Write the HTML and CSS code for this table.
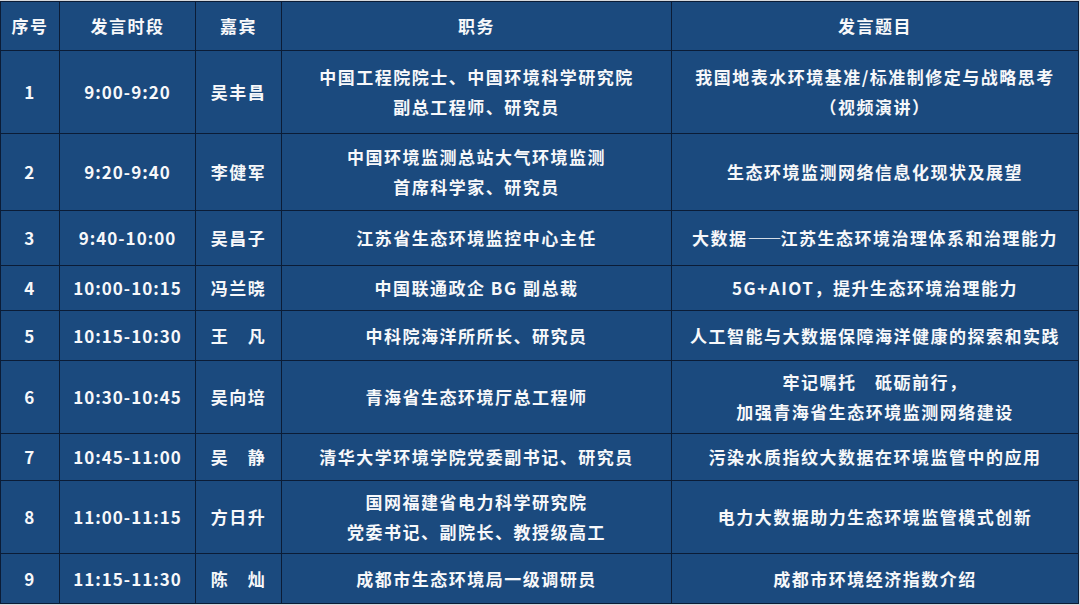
FILE: index.html
```html
<!DOCTYPE html>
<html lang="zh-CN">
<head>
<meta charset="utf-8">
<title>议程</title>
<link rel="stylesheet" href="styles.css">
</head>
<body>
<table class="agenda">
  <colgroup>
    <col class="c-no"><col class="c-time"><col class="c-name"><col class="c-role"><col class="c-topic">
  </colgroup>
  <thead>
    <tr class="r-head"><th>序号</th><th>发言时段</th><th>嘉宾</th><th>职务</th><th>发言题目</th></tr>
  </thead>
  <tbody>
    <tr class="r1"><td>1</td><td class="time">9:00-9:20</td><td>吴丰昌</td><td>中国工程院院士、中国环境科学研究院<br>副总工程师、研究员</td><td>我国地表水环境基准/标准制修定与战略思考<br>（视频演讲）</td></tr>
    <tr class="r2"><td>2</td><td class="time">9:20-9:40</td><td>李健军</td><td>中国环境监测总站大气环境监测<br>首席科学家、研究员</td><td>生态环境监测网络信息化现状及展望</td></tr>
    <tr class="r3"><td>3</td><td class="time">9:40-10:00</td><td>吴昌子</td><td>江苏省生态环境监控中心主任</td><td>大数据<span class="dash">——</span>江苏生态环境治理体系和治理能力</td></tr>
    <tr class="r4"><td>4</td><td class="time">10:00-10:15</td><td>冯兰晓</td><td>中国联通政企 BG 副总裁</td><td>5G+AIOT，提升生态环境治理能力</td></tr>
    <tr class="r5 line-light"><td>5</td><td class="time">10:15-10:30</td><td>王　凡</td><td>中科院海洋所所长、研究员</td><td>人工智能与大数据保障海洋健康的探索和实践</td></tr>
    <tr class="r6 line-gray"><td>6</td><td class="time">10:30-10:45</td><td>吴向培</td><td>青海省生态环境厅总工程师</td><td>牢记嘱托　砥砺前行，<br>加强青海省生态环境监测网络建设</td></tr>
    <tr class="r7"><td>7</td><td class="time">10:45-11:00</td><td>吴　静</td><td>清华大学环境学院党委副书记、研究员</td><td>污染水质指纹大数据在环境监管中的应用</td></tr>
    <tr class="r8"><td>8</td><td class="time">11:00-11:15</td><td>方日升</td><td>国网福建省电力科学研究院<br>党委书记、副院长、教授级高工</td><td>电力大数据助力生态环境监管模式创新</td></tr>
    <tr class="r9 line-gray"><td>9</td><td class="time">11:15-11:30</td><td>陈　灿</td><td>成都市生态环境局一级调研员</td><td>成都市环境经济指数介绍</td></tr>
  </tbody>
</table>
</body>
</html>
```
FILE: styles.css
```css
html, body {
  margin: 0;
  padding: 0;
  background: #d6d8dc;
}
body {
  padding-top: 1px;
  width: 1080px;
  height: 605px;
  overflow: hidden;
}
.agenda {
  width: 1078px;
  table-layout: fixed;
  border-collapse: collapse;
  background: #1b4a7e;
  color: #f7f8fa;
  font-family: "Noto Sans CJK SC", "Noto Sans", sans-serif;
  font-weight: 700;
  font-size: 17px;
  letter-spacing: 1.5px;
}
.c-no { width: 59px; }
.c-time { width: 136px; }
.c-name { width: 86px; }
.c-role { width: 390px; }
.c-topic { width: 407px; }
.agenda th, .agenda td {
  border: 1px solid #0b1c36;
  text-align: center;
  vertical-align: middle;
  padding: 0;
  line-height: 30px;
  font-weight: 700;
  white-space: nowrap;
}
.agenda td.time { letter-spacing: 1px; }
.dash { letter-spacing: -1px; }
.r-head { height: 49px; }
.r1 { height: 83px; }
.r2 { height: 77px; }
.r3 { height: 55px; }
.r4 { height: 45px; }
.r5 { height: 50px; }
.r6 { height: 73px; }
.r7 { height: 47px; }
.r8 { height: 73px; }
.r9 { height: 50px; }
.line-light td { border-top-color: #c8d2de; }
.line-gray td { border-top-color: #8d939b; }
```
